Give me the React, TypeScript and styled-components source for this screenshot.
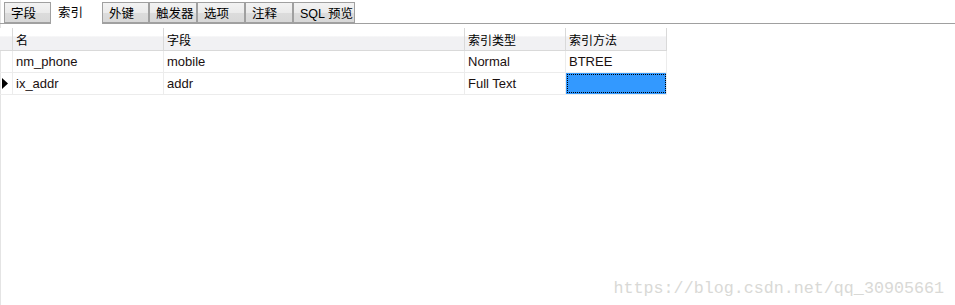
import React from 'react';
import styled, { createGlobalStyle } from 'styled-components';

const GlobalStyle = createGlobalStyle`
  html, body {
    margin: 0;
    padding: 0;
    background: #fff;
  }
  body {
    font-family: "Liberation Sans", "Noto Sans CJK SC", sans-serif;
    font-size: 13px;
    color: #111;
  }
`;

const Page = styled.div`
  position: relative;
  width: 955px;
  height: 305px;
  overflow: hidden;
  background: #fff;
  box-shadow: inset 1px 0 0 #e4e4e4;
`;

const TabBar = styled.div`
  display: flex;
  align-items: flex-end;
  height: 24px;
  padding-left: 4px;
  border-bottom: 1px solid #a0a0a0;
  box-sizing: border-box;
`;

const Tab = styled.div<{ $w: number; $active?: boolean }>`
  width: ${({ $w }) => $w}px;
  flex: none;
  box-sizing: border-box;
  height: ${({ $active }) => ($active ? 24 : 21)}px;
  margin-bottom: ${({ $active }) => ($active ? -1 : 0)}px;
  padding-left: 6px;
  display: flex;
  align-items: center;
  white-space: nowrap;
  font-size: 12.5px;
  color: #000;
  border: 1px solid #a0a0a0;
  border-bottom: ${({ $active }) => ($active ? 'none' : '1px solid #a0a0a0')};
  background: ${({ $active }) =>
    $active ? '#fff' : 'linear-gradient(to bottom, #f3f3f3 0%, #ebebeb 50%, #dcdcdc 51%, #d8d8d8 100%)'};
  ${({ $active }) => ($active ? 'border-color: #fff; padding-bottom: 3px;' : '')}
`;

const Grid = styled.div`
  margin-top: 4px;
  width: 667px;
`;

const cols = '13px 151px 301px 101px 101px';

const HeaderRow = styled.div`
  display: grid;
  grid-template-columns: ${cols};
  height: 22px;
  border-bottom: 1px solid #d9d9d9;
  background: linear-gradient(to bottom, #fff 0%, #fff 38%, #f1f1f3 39%, #f1f1f3 100%);
`;

const HeadCell = styled.div`
  border-right: 1px solid #d9d9d9;
  padding-left: 3px;
  display: flex;
  align-items: center;
  font-size: 12px;
  color: #000;
  &:first-child {
    padding: 0;
  }
`;

const Row = styled.div`
  display: grid;
  grid-template-columns: ${cols};
  height: 22px;
  box-sizing: border-box;
  border-bottom: 1px solid #ececec;
`;

const Cell = styled.div<{ $selected?: boolean }>`
  border-right: 1px solid #ececec;
  padding-left: 3px;
  display: flex;
  align-items: center;
  color: #1a1010;
  ${({ $selected }) =>
    $selected
      ? `
    background: #3399ff;
    outline: 1px dotted #000;
    outline-offset: -2px;
    box-shadow: inset 0 0 0 1px #3399ff;
  `
      : ''}
`;

const Indicator = styled.div`
  border-right: 1px solid #ececec;
  display: flex;
  align-items: center;
  justify-content: center;
  padding-right: 2px;
`;

const Watermark = styled.div`
  position: absolute;
  right: 11px;
  bottom: 7px;
  font-family: "Liberation Mono", monospace;
  font-size: 16.7px;
  color: #d9d9d6;
`;

const tabs = [
  { label: '字段', w: 47 },
  { label: '索引', w: 51, active: true },
  { label: '外键', w: 47 },
  { label: '触发器', w: 48 },
  { label: '选项', w: 48 },
  { label: '注释', w: 48 },
  { label: 'SQL 预览', w: 62 },
];

const rows = [
  { name: 'nm_phone', field: 'mobile', type: 'Normal', method: 'BTREE' },
  { name: 'ix_addr', field: 'addr', type: 'Full Text', method: '', current: true },
];

export default function App() {
  return (
    <Page>
      <GlobalStyle />
      <TabBar>
        {tabs.map((t) => (
          <Tab key={t.label} $w={t.w} $active={t.active}>
            {t.label}
          </Tab>
        ))}
      </TabBar>
      <Grid>
        <HeaderRow>
          <HeadCell />
          <HeadCell>名</HeadCell>
          <HeadCell>字段</HeadCell>
          <HeadCell>索引类型</HeadCell>
          <HeadCell>索引方法</HeadCell>
        </HeaderRow>
        {rows.map((r) => (
          <Row key={r.name}>
            <Indicator>
              {r.current && (
                <svg width="6" height="11" viewBox="0 0 6 11">
                  <path d="M0 0 L6 5.5 L0 11 Z" fill="#000" />
                </svg>
              )}
            </Indicator>
            <Cell>{r.name}</Cell>
            <Cell>{r.field}</Cell>
            <Cell>{r.type}</Cell>
            <Cell $selected={r.current}>{r.method}</Cell>
          </Row>
        ))}
      </Grid>
      <Watermark>https://blog.csdn.net/qq_30905661</Watermark>
    </Page>
  );
}
